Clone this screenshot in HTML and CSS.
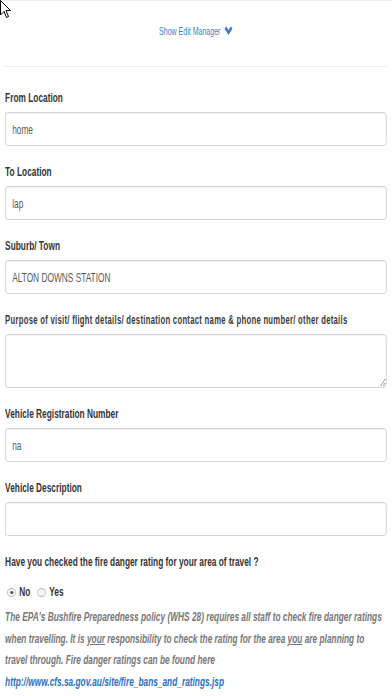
FILE: index.html
```html
<!DOCTYPE html>
<html lang="en">
<head>
    <meta charset="UTF-8">
    <meta name="viewport" content="width=device-width, initial-scale=1.0">
    <title>Travel Log</title>
    <link rel="stylesheet" href="styles.css">
</head>
<body>
    <svg class="cursor" width="11" height="20" viewBox="0 0 11 20">
        <path d="M0.5 0.5 L0.5 15 L4 11.5 L6.5 17.5 L8.5 16.5 L6 10.5 L10.5 10.5 Z" fill="#fff" stroke="#000" stroke-width="1"/>
    </svg>

    <div class="frame">
        <div class="page">
            <div class="edit-toggle">
                <a href="#">Show Edit Manager</a>
                <svg class="chevron" width="14" height="9" viewBox="0 0 14 9">
                    <path d="M2 1.5 L7 6.5 L12 1.5" fill="none" stroke="#3d7fc9" stroke-width="3.4"/>
                </svg>
            </div>

            <hr class="divider">

            <form>
                <div class="field">
                    <label for="fromLocation">From Location</label>
                    <input type="text" id="fromLocation" class="text-input" value="home">
                </div>

                <div class="field">
                    <label for="toLocation">To Location</label>
                    <input type="text" id="toLocation" class="text-input" value="lap">
                </div>

                <div class="field">
                    <label for="suburb">Suburb/ Town</label>
                    <input type="text" id="suburb" class="text-input" value="ALTON DOWNS STATION">
                </div>

                <div class="field">
                    <label for="purpose" class="small-label">Purpose of visit/ flight details/ destination contact name &amp; phone number/ other details</label>
                    <textarea id="purpose" class="text-area"></textarea>
                </div>

                <div class="field">
                    <label for="rego">Vehicle Registration Number</label>
                    <input type="text" id="rego" class="text-input" value="na">
                </div>

                <div class="field">
                    <label for="vehicleDesc">Vehicle Description</label>
                    <input type="text" id="vehicleDesc" class="text-input">
                </div>

                <div class="question">Have you checked the fire danger rating for your area of travel ?</div>

                <div class="radio-row">
                    <label class="radio"><input type="radio" name="fireCheck" checked>No</label>
                    <label class="radio"><input type="radio" name="fireCheck">Yes</label>
                </div>

                <p class="note">
                    The EPA's Bushfire Preparedness policy (WHS 28) requires all staff to check fire danger ratings<br>
                    when travelling. It is <u>your</u> responsibility to check the rating for the area <u>you</u> are planning to<br>
                    travel through. Fire danger ratings can be found here<br>
                    <a href="#">http://www.cfs.sa.gov.au/site/fire_bans_and_ratings.jsp</a>
                </p>
            </form>
        </div>
    </div>
</body>
</html>
```

FILE: styles.css
```css
html, body {
    margin: 0;
    padding: 0;
    background: #fff;
}

body {
    font-family: "Liberation Sans", Arial, sans-serif;
    color: #333;
    border-top: 1px solid #f2f2f2;
}

.frame {
    width: 392px;
    overflow: hidden;
}

/* the source page is squeezed horizontally, so lay it out wide and scale it */
.page {
    width: 612px;
    padding: 0 8px;
    box-sizing: border-box;
    transform: scaleX(0.64);
    transform-origin: 0 0;
}

.cursor {
    position: absolute;
    left: 0;
    top: 0;
    z-index: 2;
}

.edit-toggle {
    padding-top: 23px;
    line-height: 14px;
    text-align: center;
    font-size: 11px;
}

.edit-toggle a {
    color: #3d7fc9;
    text-decoration: none;
}

.chevron {
    vertical-align: 0;
    margin-left: 2px;
}

.divider {
    border: none;
    border-top: 1px solid #ebebeb;
    margin: 28px 0 22px 0;
}

.field {
    margin-bottom: 17px;
}

.field label {
    display: block;
    font-size: 13px;
    font-weight: bold;
    line-height: 18px;
    margin-bottom: 5px;
}

.field .small-label {
    font-size: 12px;
    letter-spacing: 0.45px;
    color: #3a3a3a;
}

.text-input,
.text-area {
    display: block;
    width: 100%;
    box-sizing: border-box;
    border: 1px solid #ccc;
    border-radius: 4px;
    padding: 0 10px;
    font-family: inherit;
    font-size: 13px;
    color: #5a5a5a;
    box-shadow: inset 0 1px 1px rgba(0, 0, 0, 0.05);
}

.text-input {
    height: 34px;
}

.text-area {
    height: 54px;
    padding: 6px 10px;
}

.question {
    font-size: 13px;
    font-weight: bold;
    line-height: 18px;
}

.radio-row {
    margin-top: 12px;
    line-height: 18px;
    font-size: 13px;
    font-weight: bold;
}

.radio {
    margin-right: 4px;
}

/* radios are drawn wide so they come out round after the squeeze */
.radio input {
    appearance: none;
    -webkit-appearance: none;
    width: 14px;
    height: 9px;
    margin: 0 5px 0 3px;
    border: 1px solid #b5b5b5;
    border-radius: 50%;
    background: #f4f4f4;
    vertical-align: -1px;
    position: relative;
}

.radio input:checked::after {
    content: "";
    position: absolute;
    left: 3.5px;
    top: 2px;
    width: 5px;
    height: 3px;
    border-radius: 50%;
    background: #555;
}

.note {
    margin: 5px 0 0 0;
    font-size: 13px;
    font-style: italic;
    font-weight: bold;
    line-height: 21.7px;
    color: #777;
}

.note a {
    color: #2d6fc0;
    text-decoration: none;
}
```
